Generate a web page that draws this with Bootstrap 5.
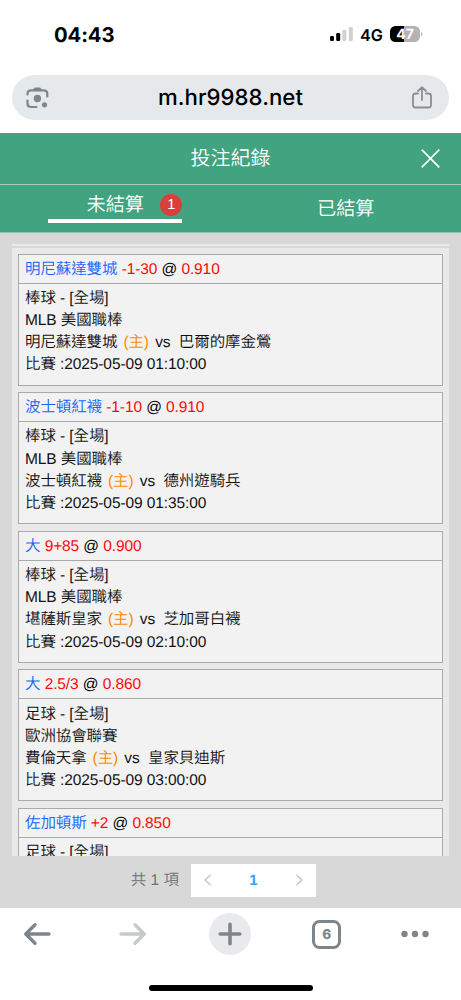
<!DOCTYPE html>
<html lang="zh-Hant">
<head>
<meta charset="utf-8">
<meta name="viewport" content="width=device-width, initial-scale=1">
<title>投注紀錄</title>
<link href="https://cdn.jsdelivr.net/npm/bootstrap@5.3.0/dist/css/bootstrap.min.css" rel="stylesheet">
<style>
  body { font-family: "Liberation Sans", "Noto Sans CJK TC", sans-serif; font-weight: 350; color: #111; background: #fff; text-rendering: geometricPrecision; }
  svg { display: block; flex: none; }
  .screen { height: 1000px; }
  .ui-font { font-family: Inter, sans-serif; color: #000; }
  /* status bar */
  .status-row { height: 75px; padding: 0 38px 7px 54px; }
  .clock { font-size: 20.3px; font-weight: 700; letter-spacing: -.1px; line-height: 24px; padding-top: 1px; }
  .signal { font-size: 16.2px; font-weight: 600; line-height: 20px; }
  .net-type { margin: 0 7px 0 6px; padding-top: 1px; }
  .battery { width: 30px; height: 16.5px; border-radius: 5.5px; background: linear-gradient(90deg, #000 47%, #b3b3b3 47%); color: #fff; font-size: 14px; font-weight: 700; line-height: 17.5px; }
  /* address bar */
  .address { height: 45px; margin: 0 12px; padding: 0 17px 0 14px; background: #e6e9ec; font-size: 22.2px; font-weight: 500; line-height: 28px; }
  .host { letter-spacing: .05px; }
  /* page header */
  .title-row { height: 52px; margin-top: 13px; background: #41a380; border-bottom: 1.5px solid #a7cfc0; font-size: 20px; line-height: 24px; color: #fff; padding: 0 21px 0 20px; }
  .tab-row { height: 48px; background: #41a380; color: #fff; font-size: 19.2px; border-bottom: 1px solid #8fc4b0; }
  .tab-link { height: 38px; width: 134px; color: #fff; line-height: 24px; border-bottom: 4px solid transparent; }
  .tab-link.current { border-color: #fff; padding-top: 9px; }
  .tab-link.settled { padding-top: 13px; }
  .count { width: 22px; height: 22px; background: #d9403c; font-size: 14.5px; line-height: 22px; top: 9px; right: 0; }
  /* records */
  .content { height: 675px; background: #d8d8d8; padding: 11px 12px 0; }
  .strip { height: 2px; background: #e9e9e9; margin-bottom: 2px; }
  .records { height: 607.6px; background: #e9e9e9; padding: 5.7px 6px 0; }
  .bet { height: 132px; margin-bottom: 6.6px; border: 1px solid #a9a9a9; background: #f2f2f2; font-size: 15.5px; letter-spacing: -.1px; line-height: 22.2px; flex: none; }
  .bet-head { height: 29px; border-bottom: 1px solid #a9a9a9; padding: 4px 6px 0; white-space: pre; color: #000; }
  .bet-body { padding: 4.2px 6px 0; white-space: pre; }
  .bet-body > div { height: 22.2px; }
  .team { color: #1467f5; }
  .odds { color: #ff0909; }
  .home { color: #ff8c00; margin: 0 2px 0 1.8px; }
  /* pager */
  .pager { padding-top: 8px; }
  .total { width: 179px; padding-right: 12px; color: #707277; font-size: 15.5px; line-height: 33px; }
  .pages { width: 125px; height: 33px; background: #fff; color: #409eff; font-weight: 700; font-size: 15px; line-height: 33px; padding: 0 12px 0 12px; }
  /* browser toolbar */
  .toolbar { height: 52px; padding: 0 32px 0 22px; color: #7f868b; }
  .forward { margin-left: 6px; }
  .plus { width: 42px; height: 42px; margin-left: 1px; background: #e8eaee; }
  .tab-count { width: 29px; height: 29px; border: 3px solid #7f868b; border-radius: 7.5px; color: #7f868b; font-size: 13.5px; font-weight: 800; line-height: 24px; margin-left: 2px; }
  .home-bar { width: 164px; height: 6px; margin-top: 25px; background: #000; }
</style>
</head>
<body>
<main class="screen d-flex flex-column overflow-hidden">
  <div class="status-row ui-font d-flex align-items-center justify-content-between flex-shrink-0">
    <span class="clock">04:43</span>
    <div class="signal d-flex align-items-center">
      <svg width="24" height="16" viewBox="0 0 24 16"><g fill="#000"><rect x="0" y="10" width="4" height="5" rx="1.2"/><rect x="6.2" y="7" width="4" height="8" rx="1.2"/></g><g fill="#d0d0d0"><rect x="12.4" y="4" width="4" height="11" rx="1.2"/><rect x="18.8" y="1" width="4" height="14" rx="1.2"/></g></svg>
      <span class="net-type">4G</span>
      <div class="battery text-center">47</div>
      <svg width="3" height="6" viewBox="0 0 3 6"><path d="M1 .8a2.4 2.4 0 0 1 0 4.4z" fill="#b3b3b3"/></svg>
    </div>
  </div>
  <div class="address ui-font rounded-pill d-flex align-items-center justify-content-between flex-shrink-0">
    <svg width="23" height="23" viewBox="0 0 23 23" fill="none" stroke="#7f868b" stroke-width="2.2" stroke-linecap="round"><path d="M1.500 8.500V7.800Q1.500 4.300 5 4.300H17.800Q21.300 4.300 21.300 7.800V10.500M1.500 14.500V17.500Q1.500 21 5 21H10.500"/><path d="M7.500 4 8.500 2h5.800l1 2z" fill="#7f868b" stroke-width="1"/><circle cx="11.400" cy="12.500" r="3.700" fill="#7f868b" stroke="none"/><circle cx="18.500" cy="18.800" r="2.600" fill="#7f868b" stroke="none"/></svg>
    <span class="host">m.hr9988.net</span>
    <svg width="20" height="23" viewBox="0 0 20 23" fill="none" stroke="#8b8e92" stroke-width="1.800" stroke-linecap="round" stroke-linejoin="round"><path d="M6 7.500H3.500Q1 7.500 1 10V19Q1 21.500 3.500 21.500H16.500Q19 21.500 19 19V10Q19 7.500 16.500 7.500H14M10 14V1.500M6 5l4-3.800L14 5"/></svg>
  </div>

  <header class="title-row d-flex align-items-center flex-shrink-0">
    <span class="flex-fill text-center ps-3 ms-1">投注紀錄</span>
    <svg width="19" height="19" viewBox="0 0 19 19" stroke="#fff" stroke-width="1.7"><path d="M.7.7 18.3 18.3M18.3.7.7 18.3"/></svg>
  </header>
  <nav class="tab-row row g-0 flex-shrink-0">
    <div class="col-6 d-flex justify-content-center"><div class="tab-link current position-relative text-center">未結算<span class="count rounded-circle position-absolute">1</span></div></div>
    <div class="col-6 d-flex justify-content-center"><div class="tab-link settled text-center">已結算</div></div>
  </nav>

  <section class="content flex-shrink-0">
    <div class="strip"></div>
    <div class="records overflow-hidden d-flex flex-column">
      <article class="bet">
        <div class="bet-head"><span class="team">明尼蘇達雙城</span> <span class="odds">-1-30</span> @ <span class="odds">0.910</span></div>
        <div class="bet-body"><div>棒球 - [全場]</div><div>MLB 美國職棒</div><div>明尼蘇達雙城 <span class="home">(主)</span> vs  巴爾的摩金鶯</div><div>比賽 :2025-05-09 01:10:00</div></div>
      </article>
      <article class="bet">
        <div class="bet-head"><span class="team">波士頓紅襪</span> <span class="odds">-1-10</span> @ <span class="odds">0.910</span></div>
        <div class="bet-body"><div>棒球 - [全場]</div><div>MLB 美國職棒</div><div>波士頓紅襪 <span class="home">(主)</span> vs  德州遊騎兵</div><div>比賽 :2025-05-09 01:35:00</div></div>
      </article>
      <article class="bet">
        <div class="bet-head"><span class="team">大</span> <span class="odds">9+85</span> @ <span class="odds">0.900</span></div>
        <div class="bet-body"><div>棒球 - [全場]</div><div>MLB 美國職棒</div><div>堪薩斯皇家 <span class="home">(主)</span> vs  芝加哥白襪</div><div>比賽 :2025-05-09 02:10:00</div></div>
      </article>
      <article class="bet">
        <div class="bet-head"><span class="team">大</span> <span class="odds">2.5/3</span> @ <span class="odds">0.860</span></div>
        <div class="bet-body"><div>足球 - [全場]</div><div>歐洲協會聯賽</div><div>費倫天拿 <span class="home">(主)</span> vs  皇家貝迪斯</div><div>比賽 :2025-05-09 03:00:00</div></div>
      </article>
      <article class="bet">
        <div class="bet-head"><span class="team">佐加頓斯</span> <span class="odds">+2</span> @ <span class="odds">0.850</span></div>
        <div class="bet-body"><div>足球 - [全場]</div></div>
      </article>
    </div>
    <div class="pager d-flex">
      <span class="total text-end">共 1 項</span>
      <div class="pages d-flex align-items-center justify-content-between">
        <svg width="9" height="12" viewBox="0 0 9 12" fill="none" stroke="#c0c4cc" stroke-width="1.4"><path d="M7.500 1 2 6l5.500 5"/></svg>
        <span>1</span>
        <svg width="9" height="12" viewBox="0 0 9 12" fill="none" stroke="#c0c4cc" stroke-width="1.4"><path d="M1.500 1 7 6l-5.500 5"/></svg>
      </div>
    </div>
  </section>

  <footer class="flex-shrink-0">
    <div class="toolbar ui-font d-flex align-items-center justify-content-between">
      <svg width="30" height="24" viewBox="0 0 30 24" fill="none" stroke="#7f868b" stroke-width="3.400" stroke-linecap="round" stroke-linejoin="round"><path d="M27 12H4M13 2.800 3.700 12 13 21.200"/></svg>
      <svg class="forward" width="30" height="24" viewBox="0 0 30 24" fill="none" stroke="#c8c9ca" stroke-width="3.400" stroke-linecap="round" stroke-linejoin="round"><path d="M3 12H26M17 2.800 26.300 12 17 21.200"/></svg>
      <div class="plus rounded-circle d-flex align-items-center justify-content-center"><svg width="24" height="24" viewBox="0 0 24 24" stroke="#7f868b" stroke-width="3.600" stroke-linecap="round"><path d="M2.200 12H21.800M12 2.200V21.800"/></svg></div>
      <div class="tab-count text-center">6</div>
      <svg width="28" height="8" viewBox="0 0 28 8" fill="#7f868b"><circle cx="3.500" cy="4" r="3.200"/><circle cx="14" cy="4" r="3.200"/><circle cx="24.500" cy="4" r="3.200"/></svg>
    </div>
    <div class="home-bar rounded-pill mx-auto"></div>
  </footer>
</main>
<script src="https://cdn.jsdelivr.net/npm/bootstrap@5.3.0/dist/js/bootstrap.bundle.min.js"></script>
</body>
</html>
